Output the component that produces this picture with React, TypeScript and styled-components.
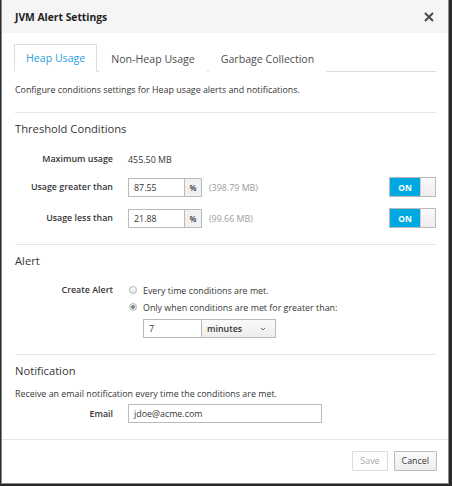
import React from "react";
import styled, { createGlobalStyle } from "styled-components";

const Global = createGlobalStyle`
  html, body { margin: 0; padding: 0; background: #2a2a2a; }
  body { font-family: "Open Sans", "Noto Sans", sans-serif; color: #363636; }
  * { box-sizing: border-box; }
`;

const Modal = styled.div`
  width: 448px;
  height: 484px;
  margin-left: 1px;
  background: #fff;
  border: 1px solid #8a8a8a;
  border-top: none;
  display: flex;
  flex-direction: column;
`;

const Header = styled.div`
  height: 33px;
  flex: none;
  background: #f5f5f5;
  display: flex;
  align-items: center;
  justify-content: space-between;
  padding: 1px 13px 0 13px;
`;

const Title = styled.div`
  font-size: 10.3px;
  font-weight: 700;
  color: #222;
`;

const Close = styled.div`
  width: 12px;
  height: 12px;
  display: flex;
  align-items: center;
  justify-content: center;
`;

const Body = styled.div`
  flex: 1;
  padding: 11px 12px 0 13px;
`;

const Tabs = styled.div`
  display: flex;
  border-bottom: 1px solid #ddd;
  height: 28px;
  margin-left: -1px;
`;

const Tab = styled.div<{ $active?: boolean }>`
  height: 28px;
  padding: 0 11px 0 11px;
  margin-right: 2px;
  display: flex;
  align-items: center;
  font-size: 10.6px;
  color: ${(p) => (p.$active ? "#2b9de0" : "#4d4d4d")};
  border: 1px solid ${(p) => (p.$active ? "#ddd" : "transparent")};
  border-bottom: ${(p) => (p.$active ? "1px solid #fff" : "none")};
  background: #fff;
`;

const Desc = styled.p`
  margin: 11px 0 0;
  font-size: 8.9px;
  color: #363636;
  line-height: 13px;
`;

const Section = styled.div`
  border-top: 1px solid #e5e5e5;
  margin-top: 16px;
  padding-top: 8px;
`;

const Heading = styled.div`
  font-size: 11.2px;
  color: #363636;
  line-height: 16px;
  margin-bottom: 14px;
`;

const Row = styled.div<{ $top?: boolean; $gap?: number }>`
  display: grid;
  grid-template-columns: 98px 1fr;
  column-gap: 15px;
  align-items: ${(p) => (p.$top ? "start" : "center")};
  margin-bottom: ${(p) => p.$gap ?? 11}px;
  min-height: 16px;
  &:last-child { margin-bottom: 0; }
`;

const Label = styled.div`
  text-align: right;
  font-size: 8.9px;
  font-weight: 600;
  color: #363636;
  line-height: 14px;
`;

const Value = styled.div`
  font-size: 8.9px;
  display: flex;
  align-items: center;
`;

const Input = styled.div<{ $w: number }>`
  width: ${(p) => p.$w}px;
  height: 19px;
  border: 1px solid #bababa;
  padding: 0 5px;
  display: flex;
  align-items: center;
  font-size: 8.9px;
  color: #363636;
  background: #fff;
`;

const Addon = styled.div`
  width: 17px;
  height: 19px;
  border: 1px solid #bababa;
  border-left: none;
  background: #f1f1f1;
  font-size: 8px;
  font-weight: 600;
  display: flex;
  align-items: center;
  justify-content: center;
`;

const Muted = styled.span`
  font-size: 8.9px;
  color: #9c9c9c;
  margin-left: 7px;
`;

const Switch = styled.div`
  margin-left: auto;
  width: 47px;
  height: 20px;
  border: 1px solid #bbb;
  display: flex;
`;

const SwitchOn = styled.div`
  width: 30px;
  background: #00a8e1;
  color: #fff;
  font-size: 8.4px;
  font-weight: 700;
  display: flex;
  align-items: center;
  justify-content: center;
`;

const SwitchHandle = styled.div`
  flex: 1;
  background: linear-gradient(#fafafa, #ededed);
  border-left: 1px solid #ccc;
`;

const Options = styled.div`
  display: flex;
  flex-direction: column;
  gap: 3px;
`;

const RadioRow = styled.label`
  display: flex;
  align-items: center;
  font-size: 8.9px;
  gap: 6px;
  height: 14px;
`;

const Radio = styled.span<{ $checked?: boolean }>`
  width: 8px;
  height: 8px;
  border-radius: 50%;
  border: 1px solid #b5b5b5;
  background: ${(p) => (p.$checked ? "radial-gradient(circle, #888 0 1.6px, #eee 2.2px)" : "linear-gradient(#fff, #e5e5e5)")};
  margin-left: 1px;
`;

const DurationRow = styled.div`
  display: flex;
  margin-left: 15px;
  margin-top: 2px;
`;

const Select = styled.div`
  width: 74px;
  height: 19px;
  border: 1px solid #bababa;
  border-left: none;
  background: linear-gradient(#fafafa, #ededed);
  display: flex;
  align-items: center;
  justify-content: space-between;
  padding: 0 9px 0 5px;
  font-size: 8.9px;
  font-weight: 600;
`;

const NotifDesc = styled.div`
  font-size: 8.9px;
  line-height: 13px;
  margin: -6px 0 4px;
`;

const Footer = styled.div`
  border-top: 1px solid #e5e5e5;
  height: 44px;
  flex: none;
  display: flex;
  justify-content: flex-end;
  align-items: center;
  gap: 6px;
  padding: 0 11px 2px 0;
`;

const Button = styled.button<{ $disabled?: boolean }>`
  height: 20px;
  padding: 0 7px;
  font-family: inherit;
  font-size: 8.9px;
  border: 1px solid ${(p) => (p.$disabled ? "#ddd" : "#bbb")};
  color: ${(p) => (p.$disabled ? "#aaa" : "#363636")};
  background: ${(p) => (p.$disabled ? "#fff" : "linear-gradient(#fafafa, #ededed)")};
  border-radius: 1px;
`;

export default function App() {
  return (
    <>
      <Global />
      <Modal>
        <Header>
          <Title>JVM Alert Settings</Title>
          <Close>
            <svg width="10" height="10" viewBox="0 0 10 10">
              <path d="M1 1 L9 9 M9 1 L1 9" stroke="#4a4a4a" strokeWidth="2" />
            </svg>
          </Close>
        </Header>
        <Body>
          <Tabs>
            <Tab $active>Heap Usage</Tab>
            <Tab>Non-Heap Usage</Tab>
            <Tab>Garbage Collection</Tab>
          </Tabs>
          <Desc>Configure conditions settings for Heap usage alerts and notifications.</Desc>
          <Section>
            <Heading>Threshold Conditions</Heading>
            <Row $gap={10}>
              <Label>Maximum usage</Label>
              <Value>455.50 MB</Value>
            </Row>
            <Row>
              <Label>Usage greater than</Label>
              <Value>
                <Input $w={57}>87.55</Input>
                <Addon>%</Addon>
                <Muted>(398.79 MB)</Muted>
                <Switch>
                  <SwitchOn>ON</SwitchOn>
                  <SwitchHandle />
                </Switch>
              </Value>
            </Row>
            <Row>
              <Label>Usage less than</Label>
              <Value>
                <Input $w={57}>21.88</Input>
                <Addon>%</Addon>
                <Muted>(99.66 MB)</Muted>
                <Switch>
                  <SwitchOn>ON</SwitchOn>
                  <SwitchHandle />
                </Switch>
              </Value>
            </Row>
          </Section>
          <Section>
            <Heading>Alert</Heading>
            <Row $top>
              <Label>Create Alert</Label>
              <Options>
                <RadioRow>
                  <Radio />
                  Every time conditions are met.
                </RadioRow>
                <RadioRow>
                  <Radio $checked />
                  Only when conditions are met for greater than:
                </RadioRow>
                <DurationRow>
                  <Input $w={59}>7</Input>
                  <Select>
                    minutes
                    <svg width="6" height="4" viewBox="0 0 6 4">
                      <path d="M1 1 L3 3 L5 1" stroke="#666" strokeWidth="1" fill="none" />
                    </svg>
                  </Select>
                </DurationRow>
              </Options>
            </Row>
          </Section>
          <Section>
            <Heading>Notification</Heading>
            <NotifDesc>Receive an email notification every time the conditions are met.</NotifDesc>
            <Row>
              <Label>Email</Label>
              <Input $w={194}>jdoe@acme.com</Input>
            </Row>
          </Section>
        </Body>
        <Footer>
          <Button $disabled>Save</Button>
          <Button>Cancel</Button>
        </Footer>
      </Modal>
    </>
  );
}
